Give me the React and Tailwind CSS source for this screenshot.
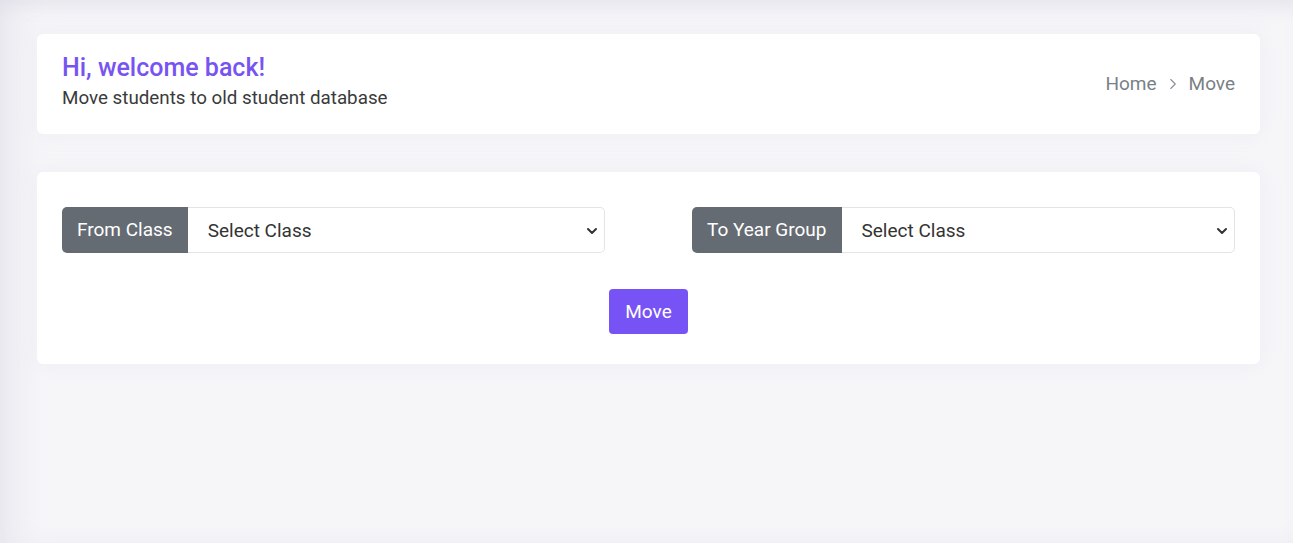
import { ChevronRight, ChevronDown } from 'lucide-react'

function ClassSelect({ label }) {
  return (
    <div className="flex h-[46px]">
      <span className="flex items-center px-[15px] bg-[#656b72] text-white text-[19px] rounded-l-[5px] whitespace-nowrap">
        {label}
      </span>
      <div className="flex-1 flex items-center justify-between pl-[20px] pr-[4px] pt-[2px] bg-white border border-[#e4e4e7] border-l-0 rounded-r-[5px] text-[19px] text-[#333]">
        <span>Select Class</span>
        <ChevronDown size={16} strokeWidth={3} className="text-[#333]" />
      </div>
    </div>
  )
}

export default function App() {
  return (
    <div
      className="min-h-[543px] bg-[#f6f6f9] pl-[37px] pr-[33px] pt-[34px] shadow-[inset_24px_0_30px_-10px_rgba(200,200,215,0.3),inset_0_16px_20px_-12px_rgba(200,200,215,0.35)]"
      style={{ fontFamily: 'Roboto, "Liberation Sans", sans-serif' }}
    >
      <div className="bg-white rounded-[6px] h-[100px] px-[25px] flex items-center justify-between shadow-[0_0_20px_rgba(220,220,230,0.25)]">
        <div>
          <h1 className="text-[25px] font-medium text-[#7754f2] leading-[28px]">Hi, welcome back!</h1>
          <p className="text-[18.8px] text-[#3a3a3a] leading-[32px]">Move students to old student database</p>
        </div>
        <div className="flex items-center text-[19px] text-[#7a7f86]">
          <span>Home</span>
          <ChevronRight size={18} strokeWidth={1.5} className="text-[#8a8f96] mx-[7px]" />
          <span>Move</span>
        </div>
      </div>

      <div className="mt-[38px] bg-white rounded-[6px] px-[25px] pt-[35px] pb-[30px] shadow-[0_0_20px_rgba(220,220,230,0.25)]">
        <div className="grid grid-cols-2 gap-[87px]">
          <ClassSelect label="From Class" />
          <ClassSelect label="To Year Group" />
        </div>
        <div className="flex justify-center mt-[36px]">
          <button className="h-[45px] px-[16px] pt-[1px] bg-[#7752f5] text-white text-[19px] rounded-[4px]">Move</button>
        </div>
      </div>
    </div>
  )
}
